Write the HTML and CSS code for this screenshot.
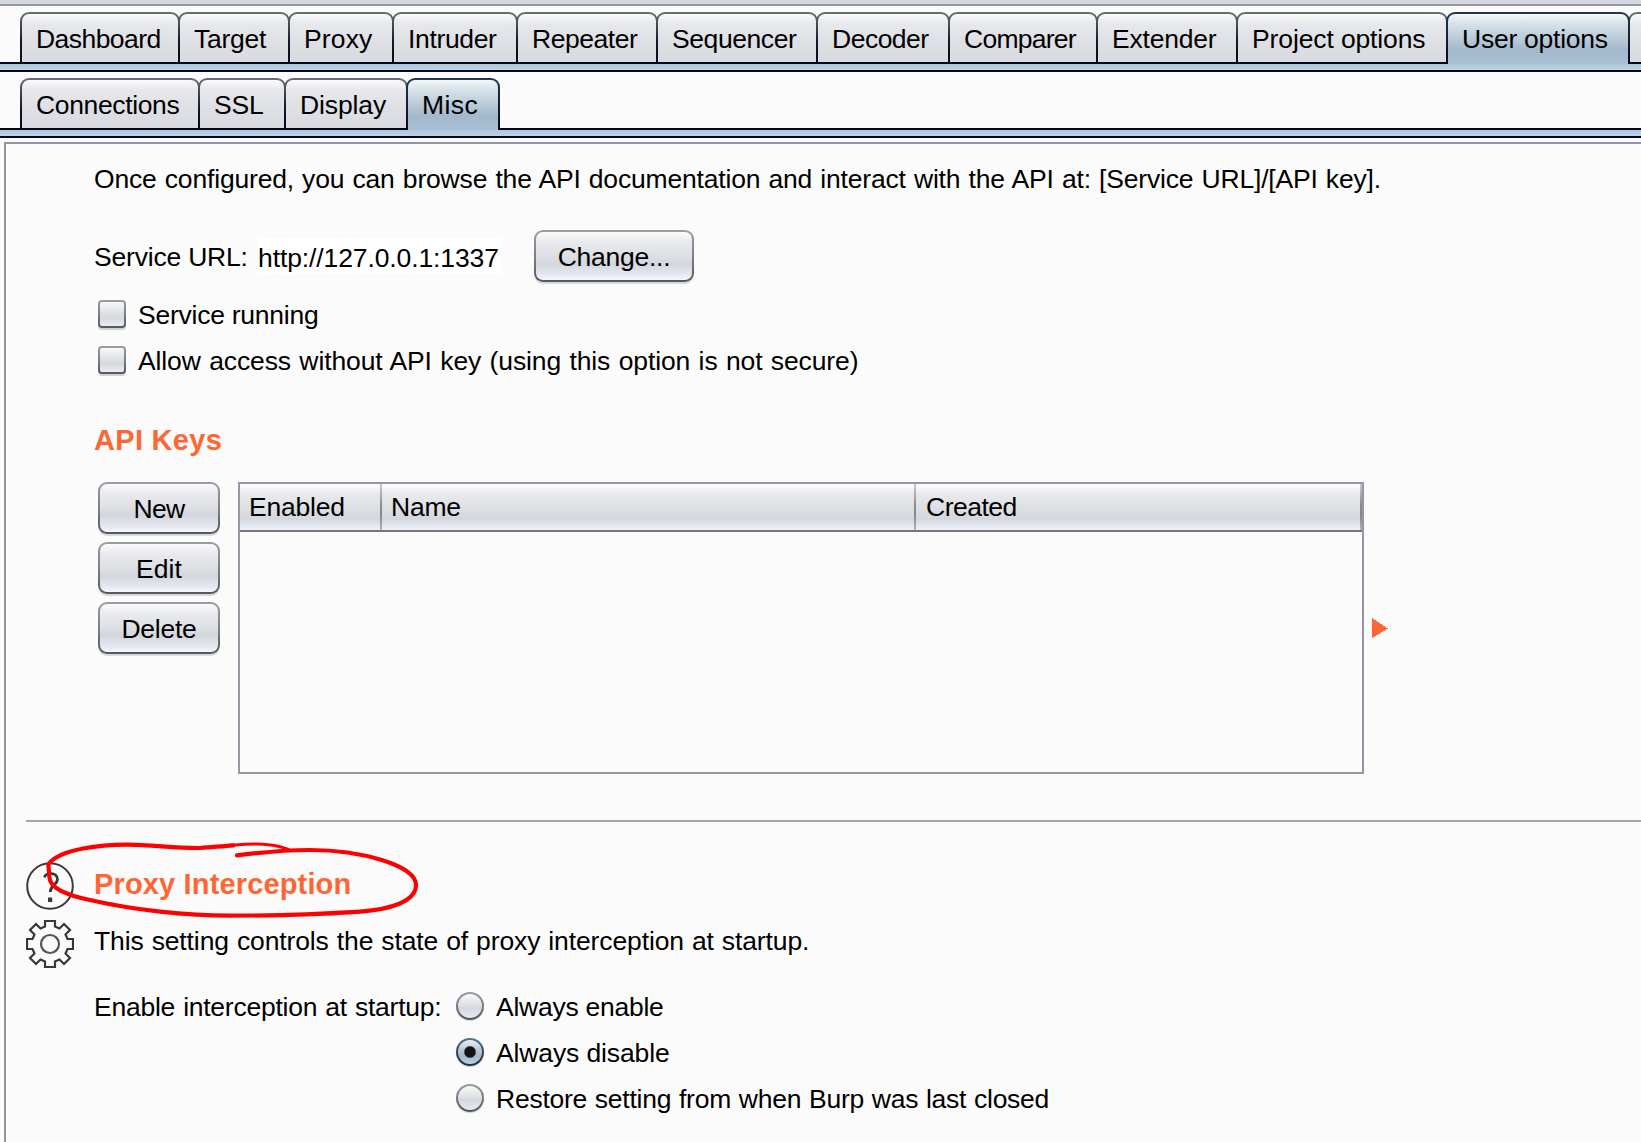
FILE: index.html
```html
<!DOCTYPE html>
<html lang="en">
<head>
<meta charset="utf-8">
<title>User options - Misc</title>
<link rel="stylesheet" href="styles.css">
</head>
<body>
<div class="window-edge"></div>
<nav class="tabs main-tabs">
  <div class="tab dashboard">Dashboard</div>
  <div class="tab target">Target</div>
  <div class="tab proxy">Proxy</div>
  <div class="tab intruder">Intruder</div>
  <div class="tab repeater">Repeater</div>
  <div class="tab sequencer">Sequencer</div>
  <div class="tab decoder">Decoder</div>
  <div class="tab comparer">Comparer</div>
  <div class="tab extender">Extender</div>
  <div class="tab project">Project options</div>
  <div class="tab user selected">User options</div>
  <div class="tab overflow"></div>
</nav>
<div class="band"></div>
<nav class="tabs sub-tabs">
  <div class="tab connections">Connections</div>
  <div class="tab ssl">SSL</div>
  <div class="tab display">Display</div>
  <div class="tab misc selected">Misc</div>
</nav>
<div class="band"></div>
<main class="panel">
  <section class="rest-api">
    <p class="intro">Once configured, you can browse the API documentation and interact with the API at: [Service URL]/[API key].</p>
    <div class="service-row">
      <span class="service-label">Service URL:</span>
      <span class="service-url">http://127.0.0.1:1337</span>
      <button class="button change">Change...</button>
    </div>
    <label class="check-row"><span class="checkbox"></span><span class="running">Service running</span></label>
    <label class="check-row"><span class="checkbox"></span><span class="allow">Allow access without API key (using this option is not secure)</span></label>
    <h2 class="keys-title">API Keys</h2>
    <div class="keys">
      <div class="key-buttons">
        <button class="button new">New</button>
        <button class="button edit">Edit</button>
        <button class="button delete">Delete</button>
      </div>
      <div class="table">
        <div class="table-head">
          <div class="cell enabled">Enabled</div>
          <div class="cell name">Name</div>
          <div class="cell created">Created</div>
        </div>
      </div>
      <svg class="arrow" width="16" height="20" viewBox="0 0 16 20" shape-rendering="crispEdges"><path d="M0 0L16 10.5L0 20Z" fill="#ff6633"/></svg>
    </div>
  </section>
  <div class="divider"></div>
  <section class="proxy-section">
    <div class="icons">
      <svg width="48" height="48" viewBox="-24 -24 48 48" fill="none" stroke="#383838" stroke-width="2">
        <circle r="22.8"/>
        <path d="M-5.5 -8.5C-5 -13.5 7.5 -14.5 7.5 -6.5C7.5 -1.5 .5 -1 .3 6" stroke-width="2.8"/>
        <path d="M-2 11.5h4.2v4.5h-4.2z" fill="#383838" stroke="none"/>
      </svg>
      <svg width="48" height="48" viewBox="-24 -24 48 48" fill="none" stroke="#383838" stroke-width="2.2">
        <path d="M-5 -23H5V-17.5L9.5 -15.5L14 -20L20 -14L15.5 -9.5L17.5 -5H23V5H17.5L15.5 9.5L20 14L14 20L9.5 15.5L5 17.5V23H-5V17.5L-9.5 15.5L-14 20L-20 14L-15.5 9.5L-17.5 5H-23V-5H-17.5L-15.5 -9.5L-20 -14L-14 -20L-9.5 -15.5L-5 -17.5Z"/>
        <circle r="9" stroke="#555" stroke-width="2.2"/>
      </svg>
    </div>
    <div class="proxy-body">
      <h2 class="proxy-title">Proxy Interception</h2>
      <p class="proxy-note">This setting controls the state of proxy interception at startup.</p>
      <div class="startup">
        <span class="startup-label">Enable interception at startup:</span>
        <div class="radios">
          <label class="radio-row"><span class="radio"></span><span class="opt-enable">Always enable</span></label>
          <label class="radio-row"><span class="radio on"></span><span class="opt-disable">Always disable</span></label>
          <label class="radio-row"><span class="radio"></span><span class="opt-restore">Restore setting from when Burp was last closed</span></label>
        </div>
      </div>
    </div>
    <svg class="scribble" width="450" height="120" viewBox="0 0 1350 360" fill="none" stroke="#ff0000" stroke-linecap="round">
      <path stroke-width="12.5" d="M711 136C800 125 870 120 930 120C1080 120 1248 165 1248 225C1248 275 1170 298 1080 305C1000 310 900 317 690 317C560 317 400 300 270 270C200 255 148 235 148 200L145 163C180 115 310 104 380 104C460 104 520 115 600 114C640 111 670 108 700 106"/>
      <path stroke-width="9" d="M690 106C740 102 775 99 805 104Q840 108 865 118"/>
    </svg>
  </section>
</main>
</body>
</html>
```
FILE: styles.css
```css
* { box-sizing: border-box; }

body {
  margin: 0;
  width: 1641px;
  height: 1142px;
  overflow: hidden;
  display: flex;
  flex-direction: column;
  background: #fbfbfb;
  color: #000;
  font: 26.5px/30px "Liberation Sans", Arial, sans-serif;
  white-space: nowrap;
}

p, h2 { margin: 0; }

h2 {
  color: #ff6633;
  font-size: 29px;
  line-height: 34px;
  font-weight: bold;
  letter-spacing: .3px;
}

.window-edge {
  flex: none;
  height: 6px;
  background: #d6d9df;
  border-bottom: 2px solid #9297a1;
}

/* Tab strips */
.tabs {
  display: flex;
  flex: none;
  height: 56px;
  padding: 6px 0 0 20px;
}

.tab {
  flex: none;
  height: 50px;
  padding: 10px 0 0 14px;
  border: 2px solid transparent;
  border-bottom: 0;
  border-radius: 9px 9px 0 0;
  background:
    linear-gradient(#fbfbfc, #f0f1f3 5px, #e7e8eb 10px, #dfe0e5 28px, #d8dae0) padding-box,
    linear-gradient(#6b6e74, #55575e 8px, #16182a 30px, #05071a) border-box;
}
.tab + .tab { margin-left: -2px; }

.tab.selected {
  position: relative;
  z-index: 1;
  height: 52px;
  background:
    linear-gradient(#f5f8fa, #dce5ec 8px, #c3d1dd 20px, #a3b8cc 36px, #a9bfd3) padding-box,
    linear-gradient(#24374b, #1b2c40 14px, #05071a) border-box;
}

.dashboard { width: 160px; letter-spacing: -.55px; }
.target { width: 112px; letter-spacing: -.26px; }
.proxy { width: 106px; letter-spacing: .13px; }
.intruder { width: 126px; letter-spacing: -.35px; }
.repeater { width: 142px; letter-spacing: -.46px; }
.sequencer { width: 162px; letter-spacing: -.42px; }
.decoder { width: 134px; letter-spacing: -.5px; }
.comparer { width: 150px; letter-spacing: -.75px; }
.extender { width: 142px; letter-spacing: -.22px; }
.project { width: 212px; letter-spacing: -.12px; }
.user { width: 184px; letter-spacing: -.25px; }
.overflow { width: 60px; }
.connections { width: 180px; letter-spacing: -.36px; }
.ssl { width: 88px; letter-spacing: -.18px; }
.display { width: 124px; letter-spacing: -.11px; }
.misc { width: 94px; letter-spacing: .45px; }

.band {
  flex: none;
  height: 10px;
  background: linear-gradient(#afc6db, #bdd3e7);
  border: 2px solid #05071a;
  border-width: 2px 0;
}

/* Options panel */
.panel {
  flex: 1;
  margin: 4px 0 0 4px;
  border: 2px solid #9297a3;
  border-width: 2px 0 0 2px;
  min-height: 0;
}

.rest-api { padding: 20px 0 0 88px; }
.intro { height: 30px; letter-spacing: -.18px; word-spacing: 1px; }

.service-row {
  display: flex;
  align-items: flex-start;
  margin-top: 36px;
}
.service-label { width: 164px; margin-top: 12px; letter-spacing: -.2px; }
.service-url {
  width: 242px;
  height: 36px;
  margin-top: 8px;
  padding-top: 5px;
  background: #fff;
  letter-spacing: -.11px;
}

.button {
  display: block;
  height: 52px;
  padding: 1px 0 0;
  border: 2px solid transparent;
  border-radius: 9px;
  background:
    linear-gradient(#fbfbfc, #e9eaed 10px, #dfe1e5 22px, #d3d6dd 32px, #e4e7f0 42px, #f5f7fd) padding-box,
    linear-gradient(#9a9ea3, #7d8187 50%, #54575d) border-box;
  box-shadow: 0 2px 0 #d9dadd;
  color: #000;
  font: inherit;
}
.change { width: 160px; margin-left: 34px; letter-spacing: -.26px; }

.check-row {
  display: flex;
  height: 30px;
  margin-top: 16px;
}
.service-row + .check-row { margin-top: 18px; }
.checkbox {
  width: 28px;
  height: 28px;
  margin: 0 12px 0 4px;
  border: 2px solid transparent;
  border-radius: 4px;
  background:
    linear-gradient(#f8f8f9, #e2e3e7 10px, #d5d8df 16px, #e9ecf5) padding-box,
    linear-gradient(#9a9ea3, #7d8187 50%, #54575d) border-box;
  box-shadow: 0 2px 0 #cfd0db;
}
.running { letter-spacing: -.25px; }
.allow { letter-spacing: -.12px; word-spacing: 1.2px; }

.keys-title { margin: 47px 0 25px 0; }

.keys { display: flex; height: 292px; }
.key-buttons {
  display: flex;
  flex-direction: column;
  gap: 8px;
  margin: 0 18px 0 4px;
}
.key-buttons .button { width: 122px; }
.new { letter-spacing: -.6px; }
.edit { letter-spacing: .1px; }
.delete { letter-spacing: -.25px; }

.table { width: 1126px; border: 2px solid #9297a3; }
.table-head {
  display: flex;
  height: 48px;
  background: linear-gradient(#fdfdfd, #e8e9ec 10px, #dfe1e5 22px, #d5d7dc 35px, #e4e8f0 42px, #edf0f8 46px);
  border-bottom: 2px solid #737680;
}
.cell {
  padding: 8px 0 0 10px;
  border-right: 2px solid;
  border-image: linear-gradient(#c9cbcf, #858990 50%, #858990 70%, #b4b7bd) 1;
}
.enabled { width: 142px; padding-left: 9px; letter-spacing: -.2px; }
.name { width: 534px; padding-left: 9px; letter-spacing: -.2px; }
.created { width: 446px; letter-spacing: -.51px; }

.arrow { margin: 136px 0 0 8px; }

.divider { height: 2px; margin: 46px 0 0 20px; background: #a2a7b3; }

/* Proxy interception */
.proxy-section {
  position: relative;
  display: flex;
  padding: 40px 0 0 20px;
}
.icons {
  display: flex;
  flex-direction: column;
  gap: 10px;
  width: 48px;
}
.proxy-body { padding: 5px 0 0 20px; }
.proxy-title { letter-spacing: .15px; }
.proxy-note { margin: 25px 0 36px; letter-spacing: -.12px; word-spacing: .8px; }
.startup { display: flex; }
.startup-label { width: 362px; letter-spacing: -.25px; word-spacing: 1px; }
.radios { display: flex; flex-direction: column; gap: 16px; }
.radio-row { display: flex; height: 30px; }
.radio {
  display: flex;
  width: 28px;
  height: 28px;
  margin-right: 12px;
  border: 2px solid transparent;
  border-radius: 50%;
  background:
    linear-gradient(#f8f8f9, #e2e3e7 10px, #d5d8df 14px, #e6e9f0) padding-box,
    linear-gradient(#9a9ea3, #777a80 50%, #505359) border-box;
  box-shadow: 0 1px 1px #cfd0db;
}
.radio.on {
  background:
    radial-gradient(circle, #101214 5px, rgba(16,18,20,0) 6.5px) padding-box,
    linear-gradient(#e9f0f5, #bccbd8 9px, #a3b8cc 16px, #b9cfe2) padding-box,
    linear-gradient(#5c7389, #33485c 50%, #1b2c40) border-box;
}
.opt-enable { letter-spacing: -.26px; }
.opt-disable { letter-spacing: -.12px; }
.opt-restore { letter-spacing: -.25px; word-spacing: .7px; }

/* Hand-drawn ring over the section title */
.scribble { position: absolute; left: -6px; top: -12px; }
```
